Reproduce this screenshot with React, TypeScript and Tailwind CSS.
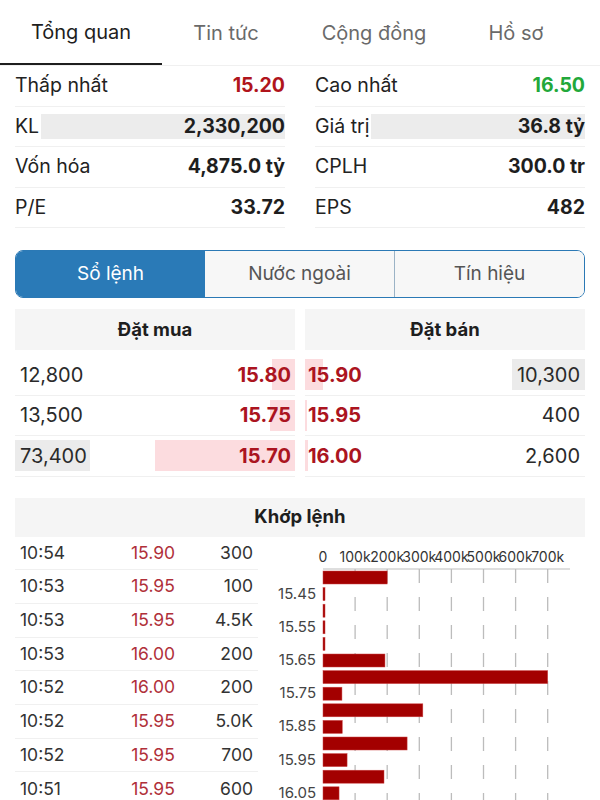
import React from "react";

const FONT = { fontFamily: "Inter, 'Noto Sans', 'Liberation Sans', sans-serif" };

const stats = [
  [
    { l: "Thấp nhất", v: "15.20", c: "text-[#b0141c]" },
    { l: "Cao nhất", v: "16.50", c: "text-[#22a83a]" },
  ],
  [
    { l: "KL", v: "2,330,200", c: "text-[#1e1e1e]", bg: true },
    { l: "Giá trị", v: "36.8 tỷ", c: "text-[#1e1e1e]", bg: true },
  ],
  [
    { l: "Vốn hóa", v: "4,875.0 tỷ", c: "text-[#1e1e1e]" },
    { l: "CPLH", v: "300.0 tr", c: "text-[#1e1e1e]" },
  ],
  [
    { l: "P/E", v: "33.72", c: "text-[#1e1e1e]" },
    { l: "EPS", v: "482", c: "text-[#1e1e1e]" },
  ],
];

const buys = [
  { vol: "12,800", price: "15.80", pink: 23, grey: 0 },
  { vol: "13,500", price: "15.75", pink: 25, grey: 0 },
  { vol: "73,400", price: "15.70", pink: 140, grey: 75 },
];
const sells = [
  { vol: "10,300", price: "15.90", pink: 18, grey: 73 },
  { vol: "400", price: "15.95", pink: 2, grey: 0 },
  { vol: "2,600", price: "16.00", pink: 3, grey: 0 },
];

const trades = [
  ["10:54", "15.90", "300"],
  ["10:53", "15.95", "100"],
  ["10:53", "15.95", "4.5K"],
  ["10:53", "16.00", "200"],
  ["10:52", "16.00", "200"],
  ["10:52", "15.95", "5.0K"],
  ["10:52", "15.95", "700"],
  ["10:51", "15.95", "600"],
];

const bars = [200, 2, 2, 1, 1, 193, 700, 59, 311, 60, 262, 75, 190, 50];
const labels = ["15.45", "15.55", "15.65", "15.75", "15.85", "15.95", "16.05"];

function Chart() {
  const x0 = 61;
  const k = 0.321;
  const axisY = 32;
  const step = 16.6;
  return (
    <svg width="323" height="264" viewBox="0 0 323 264" className="block">
      <line x1={x0} y1={axisY} x2={308} y2={axisY} stroke="#bdbdbd" strokeWidth="1" />
      {[1, 2, 3, 4, 5, 6, 7].map((i) => (
        <line
          key={i}
          x1={x0 + i * 32.1}
          x2={x0 + i * 32.1}
          y1={axisY}
          y2={264}
          stroke="#bcbcbc"
          strokeWidth="1.3"
          strokeDasharray="14 14"
        />
      ))}
      {["0", "100k", "200k", "300k", "400k", "500k", "600k", "700k"].map((t, i) => (
        <text
          key={t}
          x={x0 + i * 32.1}
          y={25}
          textAnchor="middle"
          fontSize="14"
          fill="#333"
          style={FONT}
        >
          {t}
        </text>
      ))}
      {bars.map((v, i) => {
        const y = 34 + i * step;
        const w = Math.max(2, v * k);
        return (
          <rect key={i} x={x0} y={y} width={w} height={13} fill="#a30000" stroke="#c44" strokeWidth="0.5" />
        );
      })}
      {labels.map((t, i) => (
        <text
          key={t}
          x={54}
          y={34 + (2 * i + 1) * step + 11}
          textAnchor="end"
          fontSize="15"
          fill="#444"
          style={FONT}
        >
          {t}
        </text>
      ))}
    </svg>
  );
}

export default function App() {
  return (
    <div className="w-[600px] h-[800px] overflow-hidden bg-white text-[#1e1e1e]" style={FONT}>
      {/* Top tabs */}
      <div className="flex h-[66px] border-b border-[#f0f0f0]">
        <div className="w-[162px] flex items-center justify-center text-[20px] text-[#1e1e1e] border-b-2 border-[#1e1e1e] pt-[1px]">
          Tổng quan
        </div>
        <div className="w-[128px] flex items-center justify-center text-[20px] text-[#6a6a6a]">Tin tức</div>
        <div className="w-[168px] flex items-center justify-center text-[20px] text-[#6a6a6a]">Cộng đồng</div>
        <div className="w-[116px] flex items-center justify-center text-[20px] text-[#6a6a6a]">Hồ sơ</div>
      </div>

      {/* Stats */}
      <div className="px-[15px]">
        {stats.map((row, ri) => (
          <div key={ri} className="grid grid-cols-2 gap-x-[30px]">
            {row.map((s) => (
              <div key={s.l} className="flex items-center h-[40.5px] border-b border-[#f0f0f0] text-[19.5px]">
                <span className="text-[#222]">{s.l}</span>
                {s.bg ? (
                  <div className="ml-[2px] flex-1 h-[25px] bg-[#ececec] flex items-center justify-end">
                    <span className={`font-bold ${s.c}`}>{s.v}</span>
                  </div>
                ) : (
                  <span className={`ml-auto font-bold ${s.c}`}>{s.v}</span>
                )}
              </div>
            ))}
          </div>
        ))}
      </div>

      {/* Segmented control */}
      <div className="mx-[15px] mt-[22px] h-[48px] flex rounded-[8px] border-[1.5px] border-[#2b79b5] overflow-hidden text-[19px]">
        <div className="flex-1 bg-[#2a7ab7] text-white flex items-center justify-center">Sổ lệnh</div>
        <div className="flex-1 bg-[#f7f7f7] text-[#555] flex items-center justify-center border-r border-[#9bb3c6]">
          Nước ngoài
        </div>
        <div className="flex-1 bg-[#f7f7f7] text-[#555] flex items-center justify-center">Tín hiệu</div>
      </div>

      {/* Order book */}
      <div className="mx-[15px] mt-[11px] grid grid-cols-2 gap-x-[10px]">
        <div>
          <div className="h-[41px] bg-[#f5f5f5] flex items-center justify-center font-bold text-[18.5px]">Đặt mua</div>
          <div className="mt-[5px]">
            {buys.map((b) => (
              <div key={b.price} className="relative h-[40.5px] flex items-center border-b border-[#f0f0f0] text-[20px]">
                {b.grey > 0 && <div className="absolute left-0 top-[4px] h-[31px] bg-[#ebebeb]" style={{ width: b.grey }} />}
                <div className="absolute right-0 top-[4px] h-[31px] bg-[#fcdcdf]" style={{ width: b.pink }} />
                <span className="relative pl-[5px] text-[#2a2a2a]">{b.vol}</span>
                <span className="relative ml-auto pr-[4px] font-bold text-[#ab1420]">{b.price}</span>
              </div>
            ))}
          </div>
        </div>
        <div>
          <div className="h-[41px] bg-[#f5f5f5] flex items-center justify-center font-bold text-[18.5px]">Đặt bán</div>
          <div className="mt-[5px]">
            {sells.map((b) => (
              <div key={b.price} className="relative h-[40.5px] flex items-center border-b border-[#f0f0f0] text-[20px]">
                <div className="absolute left-0 top-[4px] h-[31px] bg-[#fcdcdf]" style={{ width: b.pink }} />
                {b.grey > 0 && <div className="absolute right-0 top-[4px] h-[31px] bg-[#ebebeb]" style={{ width: b.grey }} />}
                <span className="relative pl-[3px] font-bold text-[#ab1420]">{b.price}</span>
                <span className="relative ml-auto pr-[5px] text-[#2a2a2a]">{b.vol}</span>
              </div>
            ))}
          </div>
        </div>
      </div>

      {/* Khớp lệnh */}
      <div className="mx-[15px] mt-[21px] h-[39px] bg-[#f5f5f5] flex items-center justify-center font-bold text-[18.5px]">
        Khớp lệnh
      </div>
      <div className="flex pl-[15px]">
        <div className="w-[243px]">
          {trades.map((t, i) => (
            <div key={i} className="h-[33.7px] flex items-center border-b border-[#f0f0f0] text-[17.5px]">
              <span className="w-[90px] pl-[5px] text-[#333]">{t[0]}</span>
              <span className="w-[96px] text-center text-[#b0303a]">{t[1]}</span>
              <span className="flex-1 text-right pr-[5px] text-[#333]">{t[2]}</span>
            </div>
          ))}
        </div>
        <div className="ml-[4px]">
          <Chart />
        </div>
      </div>
    </div>
  );
}
